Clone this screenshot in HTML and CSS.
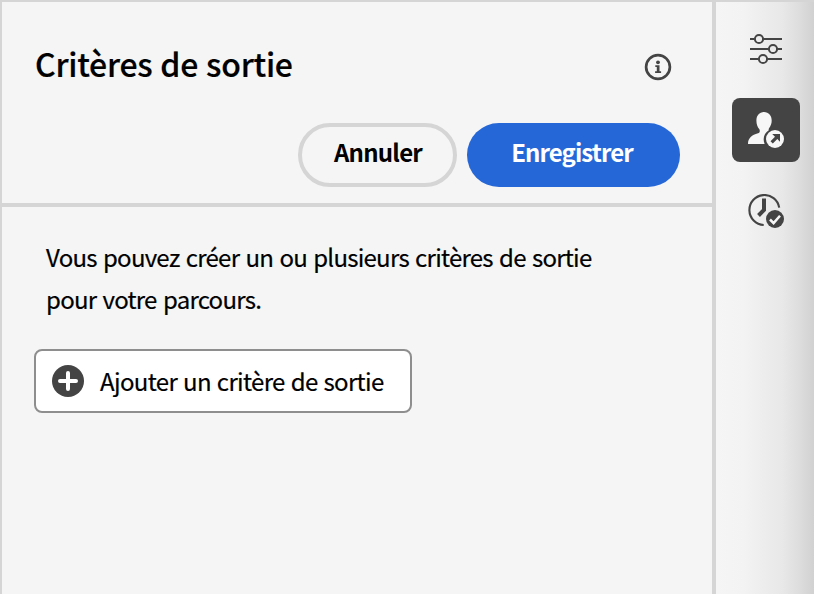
FILE: index.html
```html
<!DOCTYPE html>
<html lang="fr">
<head>
<meta charset="utf-8">
<title>Critères de sortie</title>
<link rel="stylesheet" href="styles.css">
</head>
<body>
<div class="app">
  <main class="panel">
    <header class="header">
      <div class="heading">
        <h1 class="title">Critères de sortie</h1>
        <svg class="info" viewBox="0 0 28 28" width="28" height="28">
          <circle cx="14" cy="14" r="11.9" fill="none" stroke="#444" stroke-width="2.7"/>
          <circle cx="14" cy="9.3" r="1.9" fill="#444"/>
          <path d="M11.3 12.3h4.2v6h1.6v1.8h-6v-1.8h1.7v-4.2h-1.5z" fill="#444"/>
        </svg>
      </div>
      <div class="actions">
        <button class="btn btn-cancel"><span class="label">Annuler</span></button>
        <button class="btn btn-save"><span class="label">Enregistrer</span></button>
      </div>
    </header>
    <section class="content">
      <p class="text">Vous pouvez créer un ou plusieurs critères de sortie<br>pour votre parcours.</p>
      <button class="add">
        <svg viewBox="0 0 32 32" width="32" height="32">
          <circle cx="16" cy="16" r="16" fill="#444"/>
          <path d="M16 8v16M8 16h16" stroke="#fff" stroke-width="4" stroke-linecap="round"/>
        </svg>
        <span class="add-label">Ajouter un critère de sortie</span>
      </button>
    </section>
  </main>
  <nav class="rail">
    <div class="tool">
      <svg viewBox="0 0 36 36" width="36" height="36" fill="none" stroke="#444" stroke-width="2">
        <path d="M2 8h4M14 8h20M2 18h18M28 18h6M2 28h8M18 28h16"/>
        <circle cx="11" cy="8" r="4.1"/><circle cx="25" cy="18" r="4.1"/><circle cx="15" cy="28" r="4.1"/>
      </svg>
    </div>
    <div class="tool tool-active">
      <svg viewBox="0 0 36 36" width="36" height="36">
        <path d="M16 0C11.3 0 8.4 3.6 8.4 8.4c0 3.8 1.2 6.6 2.8 8.7 1 1.4.8 3.6-1.2 4.2C3.9 23 0 26 0 32h16.6c-2.3-5.7-.2-11.3 4.2-13.8-.4-1 .1-1.6.6-2.4 1.3-2 2.3-4.3 2.3-7.4C23.7 3.6 20.7 0 16 0z" fill="#f7f7f7"/>
        <circle cx="27" cy="27" r="9" fill="#f7f7f7"/>
        <path d="M24.200 22h7.800v7.800l-2.700-2.700-4.500 4.500-2.300-2.300 4.500-4.500z" fill="#444"/>
      </svg>
    </div>
    <div class="tool tool-clock">
      <svg viewBox="0 0 36 36" width="36" height="36">
        <path d="M31.2 13.600A15 15 0 1 0 15.700 31" fill="none" stroke="#444" stroke-width="2.100"/>
        <path d="M16 4.500v11.500l-5.500 5.500" fill="none" stroke="#444" stroke-width="4"/>
        <circle cx="27" cy="25" r="9" fill="#444"/>
        <path d="M22 25.500l3.600 3.600 6.400-7.400" fill="none" stroke="#f7f7f7" stroke-width="2.500"/>
      </svg>
    </div>
  </nav>
</div>
</body>
</html>
```
FILE: styles.css
```css
* { box-sizing: border-box; }
body {
  margin: 0;
  overflow: hidden;
  font-family: "Noto Sans CJK SC", "Open Sans", sans-serif;
  color: #000;
}
svg { display: block; flex: none; }
button { font: inherit; color: inherit; padding: 0; }
.app {
  display: flex;
  width: 814px;
  height: 594px;
  background: #f5f5f5;
  border-top: 2px solid #d5d5d5;
  border-left: 2px solid #d5d5d5;
}
.panel { flex: 1; border-right: 4px solid #d5d5d5; }
.header { height: 205px; border-bottom: 4px solid #d5d5d5; }
.heading {
  display: flex;
  justify-content: space-between;
  padding: 37px 40px 0 33px;
  height: 121px;
}
.title {
  margin: 0;
  font-size: 32px;
  line-height: 48px;
  font-weight: 500;
  letter-spacing: -0.25px;
  word-spacing: 1px;
  -webkit-text-stroke: 0.2px #000;
  white-space: nowrap;
}
.info { margin-top: 14px; }
.actions {
  display: flex;
  justify-content: flex-end;
  gap: 10px;
  padding-right: 32px;
}
.btn {
  height: 64px;
  border-radius: 32px;
  font-size: 24px;
  line-height: 36px;
  font-weight: 700;
}
.label { display: block; position: relative; top: -3px; }
.btn-cancel { width: 159px; padding-left: 1px; background: transparent; border: 4px solid #d5d5d5; letter-spacing: -0.75px; }
.btn-save { width: 213px; padding-right: 3px; background: #2667d7; border: 0; color: #fff; letter-spacing: -0.9px; }
.content { padding: 29px 32px; }
.text {
  margin: 0 0 29px 12px;
  font-size: 24px;
  line-height: 42px;
  letter-spacing: -0.75px;
  word-spacing: 1.6px;
  -webkit-text-stroke: 0.2px #000;
  white-space: nowrap;
}
.add {
  display: flex;
  align-items: center;
  gap: 16px;
  width: 378px;
  height: 64px;
  padding-left: 16px;
  background: #fff;
  border: 2px solid #8e8e8e;
  border-radius: 8px;
  font-size: 24px;
  line-height: 36px;
  letter-spacing: -0.65px;
  word-spacing: 1.2px;
  -webkit-text-stroke: 0.2px #000;
  white-space: nowrap;
}
.rail {
  display: flex;
  flex-direction: column;
  gap: 17px;
  width: 98px;
  padding: 15px 14px 0 16px;
  background: linear-gradient(90deg, #f5f5f5 0%, #f3f3f3 28%, #eee 45%, #e8e8e8 68%, #ddd 85%, #d1d1d1 100%);
}
.tool {
  display: grid;
  place-items: center;
  width: 68px;
  height: 64px;
  border-radius: 8px;
}
.tool-active { background: #444; }
.tool-clock { margin-top: 1px; }
```
